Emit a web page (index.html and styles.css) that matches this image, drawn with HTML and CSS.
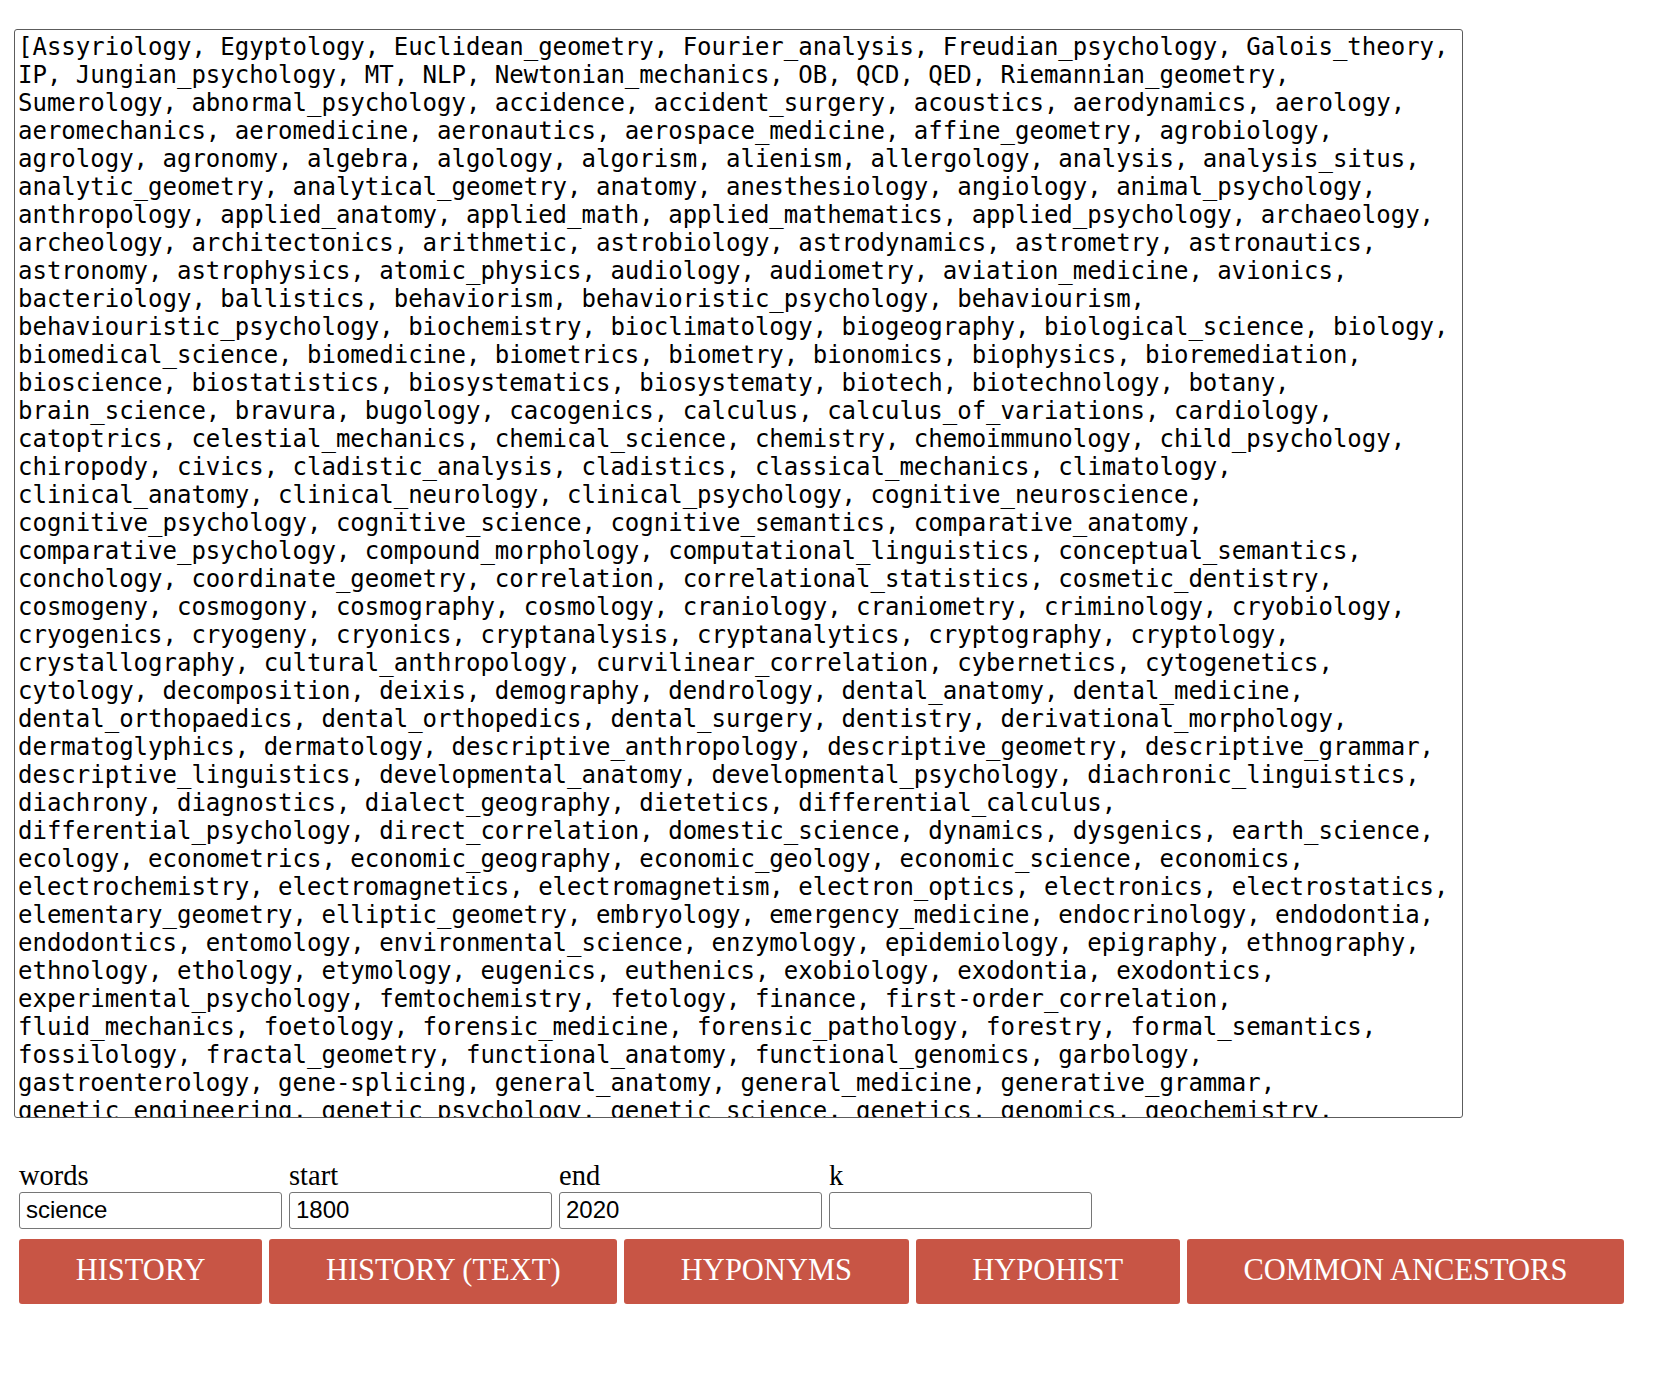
FILE: index.html
```html
<!DOCTYPE html>
<html>
<head>
<meta charset="utf-8">
<title>Hyponyms</title>
<link rel="stylesheet" href="styles.css">
</head>
<body>
<main class="page">
<textarea class="output" readonly>[Assyriology, Egyptology, Euclidean_geometry, Fourier_analysis, Freudian_psychology, Galois_theory, IP, Jungian_psychology, MT, NLP, Newtonian_mechanics, OB, QCD, QED, Riemannian_geometry, Sumerology, abnormal_psychology, accidence, accident_surgery, acoustics, aerodynamics, aerology, aeromechanics, aeromedicine, aeronautics, aerospace_medicine, affine_geometry, agrobiology, agrology, agronomy, algebra, algology, algorism, alienism, allergology, analysis, analysis_situs, analytic_geometry, analytical_geometry, anatomy, anesthesiology, angiology, animal_psychology, anthropology, applied_anatomy, applied_math, applied_mathematics, applied_psychology, archaeology, archeology, architectonics, arithmetic, astrobiology, astrodynamics, astrometry, astronautics, astronomy, astrophysics, atomic_physics, audiology, audiometry, aviation_medicine, avionics, bacteriology, ballistics, behaviorism, behavioristic_psychology, behaviourism, behaviouristic_psychology, biochemistry, bioclimatology, biogeography, biological_science, biology, biomedical_science, biomedicine, biometrics, biometry, bionomics, biophysics, bioremediation, bioscience, biostatistics, biosystematics, biosystematy, biotech, biotechnology, botany, brain_science, bravura, bugology, cacogenics, calculus, calculus_of_variations, cardiology, catoptrics, celestial_mechanics, chemical_science, chemistry, chemoimmunology, child_psychology, chiropody, civics, cladistic_analysis, cladistics, classical_mechanics, climatology, clinical_anatomy, clinical_neurology, clinical_psychology, cognitive_neuroscience, cognitive_psychology, cognitive_science, cognitive_semantics, comparative_anatomy, comparative_psychology, compound_morphology, computational_linguistics, conceptual_semantics, conchology, coordinate_geometry, correlation, correlational_statistics, cosmetic_dentistry, cosmogeny, cosmogony, cosmography, cosmology, craniology, craniometry, criminology, cryobiology, cryogenics, cryogeny, cryonics, cryptanalysis, cryptanalytics, cryptography, cryptology, crystallography, cultural_anthropology, curvilinear_correlation, cybernetics, cytogenetics, cytology, decomposition, deixis, demography, dendrology, dental_anatomy, dental_medicine, dental_orthopaedics, dental_orthopedics, dental_surgery, dentistry, derivational_morphology, dermatoglyphics, dermatology, descriptive_anthropology, descriptive_geometry, descriptive_grammar, descriptive_linguistics, developmental_anatomy, developmental_psychology, diachronic_linguistics, diachrony, diagnostics, dialect_geography, dietetics, differential_calculus, differential_psychology, direct_correlation, domestic_science, dynamics, dysgenics, earth_science, ecology, econometrics, economic_geography, economic_geology, economic_science, economics, electrochemistry, electromagnetics, electromagnetism, electron_optics, electronics, electrostatics, elementary_geometry, elliptic_geometry, embryology, emergency_medicine, endocrinology, endodontia, endodontics, entomology, environmental_science, enzymology, epidemiology, epigraphy, ethnography, ethnology, ethology, etymology, eugenics, euthenics, exobiology, exodontia, exodontics, experimental_psychology, femtochemistry, fetology, finance, first-order_correlation, fluid_mechanics, foetology, forensic_medicine, forensic_pathology, forestry, formal_semantics, fossilology, fractal_geometry, functional_anatomy, functional_genomics, garbology, gastroenterology, gene-splicing, general_anatomy, general_medicine, generative_grammar, genetic_engineering, genetic_psychology, genetic_science, genetics, genomics, geochemistry, geodesy, geography, geology, geometry, geomorphology, geophysics, geriatrics, gerontology, glottochronology, graphology, gynecology, hematology, hepatology, histology]</textarea>

<section class="controls">
  <div class="fields">
    <label class="field">
      <span class="field-label">words</span>
      <input class="field-input" type="text" value="science">
    </label>
    <label class="field">
      <span class="field-label">start</span>
      <input class="field-input" type="text" value="1800">
    </label>
    <label class="field">
      <span class="field-label">end</span>
      <input class="field-input" type="text" value="2020">
    </label>
    <label class="field">
      <span class="field-label">k</span>
      <input class="field-input" type="text" value="">
    </label>
  </div>
  <div class="actions">
    <button class="btn" type="button">HISTORY</button>
    <button class="btn" type="button">HISTORY (TEXT)</button>
    <button class="btn" type="button">HYPONYMS</button>
    <button class="btn" type="button">HYPOHIST</button>
    <button class="btn" type="button">COMMON ANCESTORS</button>
  </div>
</section>
</main>
</body>
</html>
```

FILE: styles.css
```css
html, body {
  margin: 0;
  padding: 0;
  background: #ffffff;
}

body {
  font-family: "Liberation Serif", "Times New Roman", serif;
  color: #000;
}

.page {
  padding: 29px 0 0 14px;
}

.output {
  display: block;
  box-sizing: border-box;
  width: 1449px;
  height: 1089px;
  margin: 0;
  padding: 3px;
  border: 1px solid #5c5c5c;
  border-radius: 3px;
  font-family: "DejaVu Sans Mono", "Liberation Mono", monospace;
  font-size: 24px;
  line-height: 28px;
  color: #000;
  background: #fff;
  resize: none;
  overflow: hidden;
  outline: none;
}

.controls {
  padding: 42px 0 0 5px;
}

.fields {
  display: flex;
  gap: 7px;
}

.field {
  display: flex;
  flex-direction: column;
  width: 263px;
}

.field-label {
  font-size: 28.5px;
  line-height: 32px;
  height: 32px;
}

.field-input {
  box-sizing: border-box;
  width: 263px;
  height: 37px;
  margin: 0;
  padding: 0 6px 1px;
  border: 1px solid #767676;
  border-radius: 3px;
  font-family: "Liberation Sans", Arial, sans-serif;
  font-size: 24px;
  color: #000;
  background: #fff;
}

.actions {
  display: flex;
  gap: 7px;
  margin-top: 10px;
}

.btn {
  height: 65px;
  margin: 0;
  padding: 0 56.65px 2px;
  border: none;
  border-radius: 3px;
  background: #c85545;
  color: #fff;
  font-family: "Liberation Serif", "Times New Roman", serif;
  font-size: 30.5px;
  line-height: 1;
  cursor: pointer;
}
```
